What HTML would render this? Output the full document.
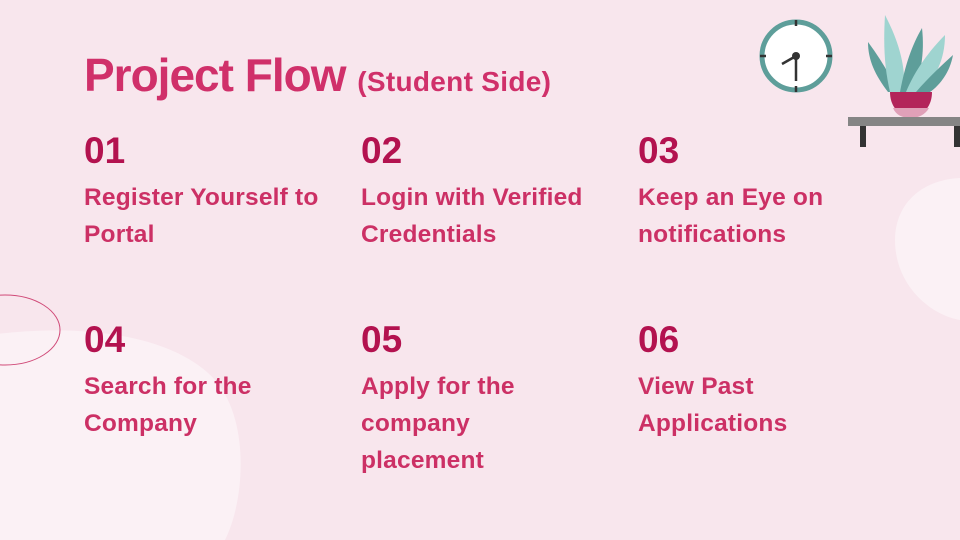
<!DOCTYPE html>
<html><head><style>
body{margin:0;width:960px;height:540px;overflow:hidden;background:#f8e6ed;font-family:"Liberation Sans",sans-serif;position:relative}
.t{position:absolute;left:84px;top:48px;color:#d0306a;font-weight:bold;font-size:46px;letter-spacing:-1px;white-space:nowrap}
.t span{font-size:28px;letter-spacing:0.3px}
.c{position:absolute;width:280px}
.n{color:#b3124f;font-weight:bold;font-size:37px;line-height:40px}
.d{color:#cc3065;font-weight:bold;font-size:24.5px;line-height:37px;margin-top:8px;letter-spacing:0.2px}
</style></head><body>
<svg width="960" height="540" style="position:absolute;left:0;top:0">
<path d="M-40 340 C 60 320 170 330 215 380 C 250 420 245 500 225 540 L -40 540 Z" fill="#fbf1f5"/>
<path d="M960 178 C 920 180 895 205 895 240 C 895 285 930 315 960 320 Z" fill="#fbf1f5"/>
<ellipse cx="5" cy="330" rx="55" ry="35" fill="none" stroke="#d04a78" stroke-width="1"/>
<circle cx="796" cy="56" r="34" fill="#fff" stroke="#5e9e9a" stroke-width="5"/>
<g stroke="#333" stroke-width="2.5"><line x1="796" y1="20" x2="796" y2="26"/><line x1="796" y1="86" x2="796" y2="92"/><line x1="760" y1="56" x2="766" y2="56"/><line x1="826" y1="56" x2="832" y2="56"/><line x1="796" y1="56" x2="796" y2="81"/><line x1="796" y1="56" x2="782" y2="64"/></g>
<circle cx="796" cy="56" r="4" fill="#333"/>
<path d="M888 92 C 875 75 868 60 868 42 C 880 58 890 75 898 92Z" fill="#5e9e9a"/>
<path d="M890 92 C 885 70 883 48 885 15 C 898 40 906 65 904 92Z" fill="#9fd4d0"/>
<path d="M900 92 C 905 65 912 45 922 28 C 925 55 920 75 914 92Z" fill="#5e9e9a"/>
<path d="M906 92 C 915 70 930 50 945 35 C 945 60 935 78 922 92Z" fill="#9fd4d0"/>
<path d="M916 92 C 928 78 942 65 953 55 C 950 72 940 85 930 92Z" fill="#5e9e9a"/>
<path d="M890 92 L 932 92 C 932 105 925 115 911 118 C 897 115 890 105 890 92Z" fill="#b3245a"/>
<path d="M893 108 L 929 108 C 925 115 918 118 911 118 C 902 118 896 115 893 108Z" fill="#e0a0b8"/>
<rect x="848" y="117" width="112" height="9" fill="#858585"/>
<rect x="860" y="126" width="6" height="21" fill="#333"/>
<rect x="954" y="126" width="6" height="21" fill="#333"/>
</svg>
<div class="t">Project Flow <span>(Student Side)</span></div>
<div class="c" style="left:84px;top:131px"><div class="n">01</div><div class="d">Register Yourself to Portal</div></div>
<div class="c" style="left:361px;top:131px"><div class="n">02</div><div class="d">Login with Verified Credentials</div></div>
<div class="c" style="left:638px;top:131px;width:200px"><div class="n">03</div><div class="d">Keep an Eye on notifications</div></div>
<div class="c" style="left:84px;top:320px;width:200px"><div class="n">04</div><div class="d">Search for the Company</div></div>
<div class="c" style="left:361px;top:320px;width:200px"><div class="n">05</div><div class="d">Apply for the company placement</div></div>
<div class="c" style="left:638px;top:320px;width:180px"><div class="n">06</div><div class="d">View Past Applications</div></div>
</body></html>
